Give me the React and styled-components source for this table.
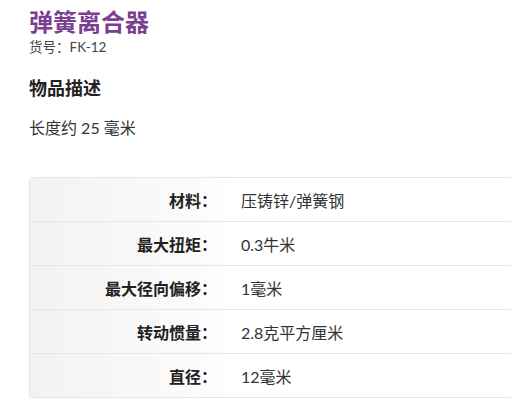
import React from "react";
import styled, { createGlobalStyle } from "styled-components";

const GlobalStyle = createGlobalStyle`
  html, body {
    margin: 0;
    padding: 0;
    background: #fff;
    overflow: hidden;
  }
  body {
    font-family: Lato, "Noto Sans CJK SC", sans-serif;
    color: #333;
  }
`;

const Page = styled.div`
  width: 640px;
  padding: 7px 0 0 29px;
`;

const Title = styled.h1`
  margin: 0;
  font-size: 24px;
  line-height: 30px;
  font-weight: 700;
  color: #7b3f92;
`;

const Sku = styled.div`
  font-size: 13.5px;
  line-height: 20px;
  color: #444;
`;

const SectionTitle = styled.h2`
  margin: 19px 0 0;
  font-size: 18px;
  line-height: 24px;
  font-weight: 700;
  color: #222;
`;

const Desc = styled.p`
  margin: 16px 0 0;
  font-size: 16px;
  line-height: 24px;
  color: #333;
`;

const Table = styled.div`
  margin-top: 37px;
  width: 620px;
  border: 1px solid #e6e6e6;
  border-radius: 4px;
  box-shadow: 0 1px 2px rgba(0, 0, 0, 0.08);
  overflow: hidden;
`;

const Row = styled.div`
  display: flex;
  height: 43px;
  border-top: ${({ $first }) => ($first ? "none" : "1px solid #e6e6e6")};
`;

const Label = styled.div`
  width: 195px;
  padding-right: 8px;
  box-sizing: border-box;
  display: flex;
  align-items: center;
  justify-content: flex-end;
  font-size: 16px;
  font-weight: 700;
  color: #222;
  background: linear-gradient(to right, #f2f2f2, #fdfdfd);
`;

const Value = styled.div`
  flex: 1;
  display: flex;
  align-items: center;
  padding-left: 16px;
  font-size: 16px;
  color: #333;
`;

const specs = [
  ["材料：", "压铸锌/弹簧钢"],
  ["最大扭矩：", "0.3牛米"],
  ["最大径向偏移：", "1毫米"],
  ["转动惯量：", "2.8克平方厘米"],
  ["直径：", "12毫米"],
];

const App = () => {
  return (
    <Page>
      <GlobalStyle />
      <Title>弹簧离合器</Title>
      <Sku>货号：FK-12</Sku>
      <SectionTitle>物品描述</SectionTitle>
      <Desc>长度约 25 毫米</Desc>
      <Table>
        {specs.map(([label, value], i) => (
          <Row key={label} $first={i === 0}>
            <Label>{label}</Label>
            <Value>{value}</Value>
          </Row>
        ))}
      </Table>
    </Page>
  );
};

export default App;
